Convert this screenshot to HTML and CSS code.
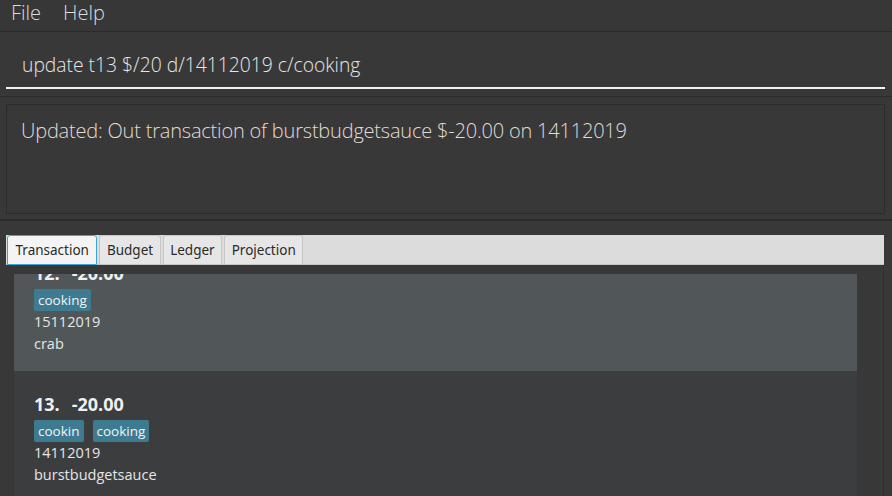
FILE: index.html
```html
<!DOCTYPE html>
<html>
<head>
<meta charset="utf-8">
<link rel="stylesheet" href="styles.css">
</head>
<body>
<div class="app">
  <div class="menubar">
    <span class="menu-item">File</span>
    <span class="menu-item">Help</span>
  </div>
  <div class="command-pane">
    <div class="command-input">update t13 $/20 d/14112019 c/cooking</div>
  </div>
  <div class="result-pane">
    <div class="result-box">Updated: Out transaction of burstbudgetsauce $-20.00 on 14112019</div>
  </div>
  <div class="tab-pane">
    <div class="tab-header">
      <div class="tab selected">Transaction</div>
      <div class="tab">Budget</div>
      <div class="tab">Ledger</div>
      <div class="tab">Projection</div>
    </div>
    <div class="tab-content">
      <div class="list">
        <div class="cell alt first">
          <div class="heading"><span class="idx">12.</span><span class="amt">-20.00</span></div>
          <div class="tags"><span class="tag">cooking</span></div>
          <div class="line">15112019</div>
          <div class="line">crab</div>
        </div>
        <div class="cell">
          <div class="heading"><span class="idx">13.</span><span class="amt">-20.00</span></div>
          <div class="tags"><span class="tag">cookin</span><span class="tag">cooking</span></div>
          <div class="line">14112019</div>
          <div class="line">burstbudgetsauce</div>
        </div>
      </div>
      <div class="scroll-gutter"></div>
    </div>
  </div>
</div>
</body>
</html>
```
FILE: styles.css
```css
* { box-sizing: border-box; }
html, body {
  margin: 0;
  padding: 0;
  background: #383838;
  width: 892px;
  height: 496px;
  overflow: hidden;
}
.app {
  display: flex;
  flex-direction: column;
  height: 496px;
  font-family: "Open Sans", "Noto Sans", sans-serif;
}
.menubar {
  height: 32px;
  background: #373737;
  border-bottom: 1px solid #2b2b2b;
  display: flex;
  gap: 22px;
  padding-left: 11px;
  align-items: flex-start;
  color: #dcdcdc;
  font-size: 20px;
  font-weight: 300;
}
.menubar .menu-item { line-height: 26px; }
.command-pane {
  height: 65px;
  background: #383838;
  border-bottom: 1px solid #2b2b2b;
  padding: 0 7px 0 6px;
}
.command-input {
  height: 57px;
  border-bottom: 2px solid #f2f2f2;
  color: #e6e6e6;
  font-size: 19.3px;
  font-weight: 300;
  padding: 19px 0 0 16px;
}
.result-pane {
  height: 124px;
  padding: 7px 7px 7px 6px;
  border-bottom: 2px solid #2b2b2b;
  background: #383838;
}
.result-box {
  height: 110px;
  border: 1px solid #2c2c2c;
  background: #383838;
  color: #e0dcd6;
  font-size: 20px;
  font-weight: 300;
  padding: 12px 0 0 14px;
  letter-spacing: -0.2px;
}
.tab-pane {
  flex: 1;
  display: flex;
  flex-direction: column;
  padding: 14px 8px 0 6px;
  background: #383838;
  min-height: 0;
}
.tab-header {
  height: 30px;
  background: #dcdcdc;
  border-bottom: 1px solid #c4c4c4;
  display: flex;
  gap: 2px;
  padding-left: 1px;
  align-items: flex-end;
  font-family: "Noto Sans", "Open Sans", sans-serif;
}
.tab {
  height: 29px;
  background: #e6e6e6;
  border: 1px solid #c6c6c6;
  border-bottom: none;
  border-radius: 3px 3px 0 0;
  font-size: 13.5px;
  color: #2a2a2a;
  padding: 5px 6.5px 0 6.5px;
}
.tab.selected {
  background: #f4f4f4;
  border: 1px solid #3aa5d8;
  border-bottom: 1px solid #3aa5d8;
  height: 30px;
  margin-bottom: -1px;
  padding: 5px 7.5px 0 7.5px;
}
.tab-content {
  flex: 1;
  display: flex;
  padding: 9px 0 0 8px;
  min-height: 0;
  overflow: hidden;
  background: #383838;
  border-right: 1px solid #2e2e2e;
}
.list {
  width: 843px;
  background: #3c3d3f;
  overflow: hidden;
}
.scroll-gutter {
  flex: 1;
  background: #383838;
}
.cell {
  background: #3c3d3f;
  padding: 21px 0 16px 20px;
  color: #e8e8e8;
}
.cell.alt { background: #515658; }
.cell.first { margin-top: -34px; }
.heading {
  font-size: 18px;
  font-weight: 700;
  line-height: 24px;
  color: #f0f0f0;
}
.heading .idx { margin-right: 12px; }
.tags {
  display: flex;
  gap: 9px;
  margin-top: 4px;
}
.tag {
  background: #3e7b91;
  color: #f4f4f4;
  font-size: 13.5px;
  line-height: 22px;
  height: 22px;
  padding: 0 4px;
  border-radius: 2px;
}
.line {
  font-size: 14.5px;
  line-height: 22px;
  color: #e6e6e6;
}
```
